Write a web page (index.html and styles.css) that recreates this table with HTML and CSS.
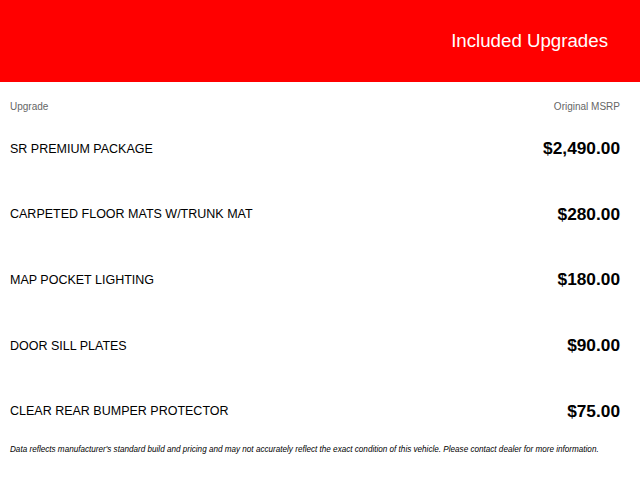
FILE: index.html
```html
<!DOCTYPE html>
<html lang="en">
<head>
<meta charset="utf-8">
<title>Included Upgrades</title>
<link rel="stylesheet" href="styles.css">
</head>
<body>
<header class="banner">
  <h1 class="banner-title">Included Upgrades</h1>
</header>
<main class="content">
  <div class="col-head">
    <span>Upgrade</span>
    <span>Original MSRP</span>
  </div>
  <ul class="list">
    <li class="row"><span class="name">SR PREMIUM PACKAGE</span><span class="price">$2,490.00</span></li>
    <li class="row"><span class="name">CARPETED FLOOR MATS W/TRUNK MAT</span><span class="price">$280.00</span></li>
    <li class="row"><span class="name">MAP POCKET LIGHTING</span><span class="price">$180.00</span></li>
    <li class="row"><span class="name">DOOR SILL PLATES</span><span class="price">$90.00</span></li>
    <li class="row"><span class="name">CLEAR REAR BUMPER PROTECTOR</span><span class="price">$75.00</span></li>
  </ul>
  <p class="note">Data reflects manufacturer's standard build and pricing and may not accurately reflect the exact condition of this vehicle. Please contact dealer for more information.</p>
</main>
</body>
</html>
```
FILE: styles.css
```css
html, body {
  margin: 0;
  padding: 0;
  background: #ffffff;
  font-family: "Liberation Sans", Arial, sans-serif;
  color: #000000;
}

.banner {
  height: 82px;
  background: #ff0000;
  display: flex;
  align-items: center;
  justify-content: flex-end;
  padding-right: 32px;
}

.banner-title {
  margin: 0;
  font-size: 18.7px;
  font-weight: normal;
  color: #ffffff;
  line-height: 1;
}

.content {
  padding: 0 20px 0 10px;
}

.col-head {
  display: flex;
  justify-content: space-between;
  padding-top: 19px;
  height: 12px;
  line-height: 12px;
  font-size: 10px;
  color: #666666;
}

.list {
  list-style: none;
  margin: 3px 0 0 0;
  padding: 0;
}

.row {
  height: 65.6px;
  display: flex;
  align-items: center;
  justify-content: space-between;
}

.name {
  font-size: 12.5px;
  color: #000000;
}

.price {
  font-size: 17.3px;
  font-weight: bold;
  color: #000000;
}

.note {
  margin: 0;
  padding-top: 1px;
  font-size: 8.15px;
  line-height: 10px;
  font-style: italic;
  color: #000000;
}
```
